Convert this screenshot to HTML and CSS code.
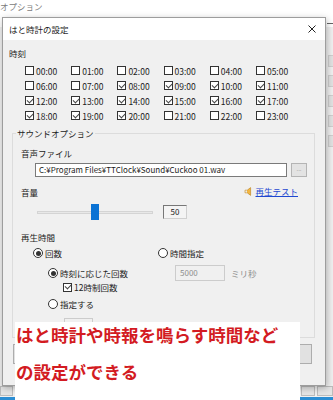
FILE: index.html
```html
<!DOCTYPE html>
<html lang="ja">
<head>
    <meta charset="UTF-8">
    <title>はと時計の設定</title>
    <link rel="stylesheet" href="styles.css">
</head>
<body>
    <!-- parent window behind the dialog -->
    <div class="parent">
        <div class="parent-title">
            <span class="parent-name">オプション</span>
            <span class="parent-dash"></span>
        </div>
        <div class="parent-body">
            <span class="side-box"></span>
            <span class="side-box"></span>
            <span class="side-box"></span>
            <span class="side-box"></span>
            <span class="side-box"></span>
        </div>
        <div class="parent-foot">
            <span class="pbtn pbtn-a"></span>
            <span class="pbtn pbtn-b"></span>
            <span class="pbtn pbtn-c"></span>
        </div>
        <div class="taskbar"></div>
    </div>

    <div class="dialog">
        <div class="titlebar">
            <span>はと時計の設定</span>
            <svg class="close" width="8" height="8" viewBox="0 0 8 8">
                <path d="M0.5 0.5L7.5 7.5M7.5 0.5L0.5 7.5" stroke="#222" stroke-width="1" fill="none"/>
            </svg>
        </div>

        <div class="content">
            <div class="label">時刻</div>
            <div class="hours">
                <label class="check"><span class="cb"></span>00:00</label>
                <label class="check"><span class="cb"></span>01:00</label>
                <label class="check"><span class="cb"></span>02:00</label>
                <label class="check"><span class="cb"></span>03:00</label>
                <label class="check"><span class="cb"></span>04:00</label>
                <label class="check"><span class="cb"></span>05:00</label>
                <label class="check"><span class="cb"></span>06:00</label>
                <label class="check"><span class="cb"></span>07:00</label>
                <label class="check"><span class="cb on"></span>08:00</label>
                <label class="check"><span class="cb on"></span>09:00</label>
                <label class="check"><span class="cb on"></span>10:00</label>
                <label class="check"><span class="cb on"></span>11:00</label>
                <label class="check"><span class="cb on"></span>12:00</label>
                <label class="check"><span class="cb on"></span>13:00</label>
                <label class="check"><span class="cb on"></span>14:00</label>
                <label class="check"><span class="cb on"></span>15:00</label>
                <label class="check"><span class="cb on"></span>16:00</label>
                <label class="check"><span class="cb on"></span>17:00</label>
                <label class="check"><span class="cb on"></span>18:00</label>
                <label class="check"><span class="cb on"></span>19:00</label>
                <label class="check"><span class="cb on"></span>20:00</label>
                <label class="check"><span class="cb"></span>21:00</label>
                <label class="check"><span class="cb"></span>22:00</label>
                <label class="check"><span class="cb"></span>23:00</label>
            </div>

            <fieldset class="group">
                <legend>サウンドオプション</legend>
                <div class="group-inner">
                    <div class="label">音声ファイル</div>
                    <div class="file-row">
                        <div class="path">C:¥Program Files¥TTClock¥Sound¥Cuckoo 01.wav</div>
                        <div class="browse">...</div>
                    </div>

                    <div class="vol-row">
                        <span class="label">音量</span>
                        <a class="test-link">
                            <svg width="10" height="9" viewBox="0 0 10 9">
                                <path d="M1 3.2h2.2L6.6 0.6v7.8L3.2 5.8H1z" fill="#f3b640" stroke="#b9801f" stroke-width="0.6"/>
                                <path d="M1.4 3.6h1.6v1.8H1.4z" fill="#e9e9e9"/>
                            </svg>
                            <span>再生テスト</span>
                        </a>
                    </div>

                    <div class="slider-row">
                        <div class="track">
                            <div class="rail"></div>
                            <div class="thumb"></div>
                        </div>
                        <div class="value">50</div>
                    </div>

                    <div class="label play-label">再生時間</div>
                    <div class="play">
                        <div class="row r1">
                            <label class="opt"><span class="rb on"></span>回数</label>
                            <label class="opt"><span class="rb"></span>時間指定</label>
                        </div>
                        <div class="row r2">
                            <label class="opt sub"><span class="rb on"></span>時刻に応じた回数</label>
                            <div class="ms">
                                <span class="field off">5000</span>
                                <span class="dim">ミリ秒</span>
                            </div>
                        </div>
                        <div class="row r3">
                            <label class="opt sub2"><span class="cb on"></span>12時制回数</label>
                        </div>
                        <div class="row r4">
                            <label class="opt sub"><span class="rb"></span>指定する</label>
                        </div>
                        <div class="row r5">
                            <span class="field small off"></span>
                            <span class="spin"></span>
                        </div>
                    </div>
                </div>
            </fieldset>

            <div class="buttons">
                <span class="btn"></span>
                <span class="btn"></span>
            </div>
        </div>
    </div>

    <div class="note">
        <p>はと時計や時報を鳴らす時間など</p>
        <p>の設定ができる</p>
    </div>
</body>
</html>
```

FILE: styles.css
```css
* {
    margin: 0;
    padding: 0;
    box-sizing: border-box;
}

html, body {
    width: 333px;
    height: 400px;
    overflow: hidden;
}

body {
    font-family: "Noto Sans CJK JP", sans-serif;
    font-size: 8.5px;
    line-height: 12px;
    color: #1b1b1b;
    background: #fff;
}

/* parent window */
.parent {
    height: 400px;
    display: flex;
    flex-direction: column;
    background: #f0f0f0;
}

.parent-title {
    height: 27px;
    background: #fff;
    display: flex;
    justify-content: space-between;
    color: #7b7b7b;
}

.parent-dash {
    width: 6px;
    height: 1px;
    margin-top: 23px;
    background: #666;
}

.parent-body {
    flex: 1;
    display: flex;
    flex-direction: column;
    gap: 8px;
    padding: 28px 0 0 328px;
}

.side-box {
    width: 20px;
    height: 12px;
    background: #e2e2e2;
    border: 1px solid #cfcfcf;
}

.parent-foot {
    height: 11px;
    display: flex;
    gap: 2px;
}

.pbtn {
    height: 10px;
    background: #e5e5e5;
    border: 1px solid #bdbdbd;
}

.pbtn-a {
    width: 13px;
    margin-right: auto;
}

.pbtn-b {
    width: 14px;
}

.pbtn-c {
    width: 16px;
}

.taskbar {
    height: 3px;
    background: #2b8dd3;
}

/* dialog */
.dialog {
    position: absolute;
    left: 2px;
    top: 17px;
    width: 324px;
    height: 369px;
    background: #f0f0f0;
    border: 1px solid #9d9d9d;
    box-shadow: 1px 2px 7px rgba(0, 0, 0, 0.28);
}

.titlebar {
    height: 22px;
    background: #fff;
    display: flex;
    align-items: center;
    justify-content: space-between;
    padding: 0 9px 0 6px;
}

.close {
    flex-shrink: 0;
}

.content {
    padding: 7px 0 0 6px;
}

.hours {
    display: grid;
    grid-template-columns: repeat(6, 46.2px);
    grid-auto-rows: 15px;
    margin: 4px 0 0 16px;
}

.check, .opt {
    display: flex;
    align-items: center;
    gap: 2px;
}

.cb {
    position: relative;
    flex-shrink: 0;
    width: 9px;
    height: 9px;
    background: #fff;
    border: 1px solid #333;
}

.cb.on::after {
    content: "";
    position: absolute;
    left: 1px;
    top: 0.5px;
    width: 5px;
    height: 2.6px;
    border-left: 1px solid #444;
    border-bottom: 1px solid #444;
    transform: rotate(-45deg);
}

.rb {
    position: relative;
    flex-shrink: 0;
    width: 10px;
    height: 10px;
    border-radius: 50%;
    background: #fff;
    border: 1px solid #333;
}

.rb.on::after {
    content: "";
    position: absolute;
    inset: 1.5px;
    border-radius: 50%;
    background: #333;
}

/* sound options */
.group {
    margin: 4px 10px 0 3px;
    border: 1px solid #dcdcdc;
    min-width: 0;
}

.group legend {
    margin-left: 3px;
    padding: 0 1px;
}

.group-inner {
    padding: 8px 7px 5px 8px;
}

.file-row {
    display: flex;
    gap: 4px;
    height: 14px;
    margin: 4px 0 0 14px;
}

.path {
    width: 253px;
    height: 14px;
    padding: 0 3px;
    font-size: 8px;
    background: #fff;
    border: 1px solid #7a7a7a;
    white-space: nowrap;
}

.browse {
    width: 16px;
    height: 14px;
    font-size: 6px;
    line-height: 10px;
    text-align: center;
    color: #9a9a9a;
    background: #e3e3e3;
    border: 1px solid #b4b4b4;
}

.vol-row {
    display: flex;
    justify-content: space-between;
    margin-top: 9px;
}

.test-link {
    display: flex;
    align-items: center;
    gap: 1px;
    margin: -2px 9px 0 0;
    color: #1f48d0;
    text-decoration: underline;
}

.slider-row {
    display: flex;
    align-items: center;
    gap: 10px;
    height: 16px;
    margin: 6px 0 0 16px;
}

.track {
    position: relative;
    display: flex;
    align-items: center;
    width: 116px;
    height: 16px;
}

.rail {
    width: 100%;
    height: 3px;
    background: #e8e8e8;
    border: 1px solid #d4d4d4;
}

.thumb {
    position: absolute;
    left: 54px;
    top: 0;
    width: 8px;
    height: 16px;
    background: #0a72d4;
}

.value {
    width: 24px;
    height: 14px;
    font-size: 8px;
    line-height: 12px;
    text-align: center;
    background: #f4f4f4;
    border: 1px solid;
    border-color: #777 #d0d0d0 #d0d0d0 #777;
}

.play-label {
    margin-top: 11px;
}

.play {
    margin: 4px 0 0 12px;
}

.row {
    display: grid;
    grid-template-columns: 125px auto;
    align-items: center;
}

.r1 {
    height: 12px;
    margin-bottom: 6px;
}

.r2 {
    height: 16px;
}

.r3 {
    height: 12px;
}

.r4 {
    height: 12px;
    margin-top: 5px;
}

.r5 {
    display: flex;
    gap: 5px;
    height: 14px;
    margin-top: 8px;
    padding-left: 31px;
}

.sub {
    padding-left: 15px;
}

.sub2 {
    padding-left: 30px;
}

.ms {
    display: flex;
    align-items: center;
    gap: 6px;
    padding-left: 17px;
}

.field {
    width: 50px;
    height: 16px;
    padding: 0 4px;
    font-size: 8px;
    line-height: 14px;
    background: #f0f0f0;
    border: 1px solid #cccccc;
}

.field.small {
    width: 29px;
    height: 14px;
}

.off, .dim {
    color: #8e8e8e;
}

.spin {
    width: 9px;
    height: 9px;
    margin-top: 2px;
    border: 1px solid #c8c8c8;
}

.buttons {
    display: flex;
    justify-content: space-between;
    margin: 6px 13px 0 4px;
}

.btn {
    width: 70px;
    height: 20px;
    background: #e1e1e1;
    border: 1px solid #adadad;
}

/* red annotation over the screenshot */
.note {
    position: absolute;
    left: 15px;
    top: 322px;
    width: 285px;
    height: 78px;
    display: flex;
    flex-direction: column;
    gap: 11px;
    padding-left: 1px;
    background: #fff;
    color: #d31b22;
    font-size: 17.5px;
    font-weight: 700;
    line-height: 26px;
    white-space: nowrap;
}
```
